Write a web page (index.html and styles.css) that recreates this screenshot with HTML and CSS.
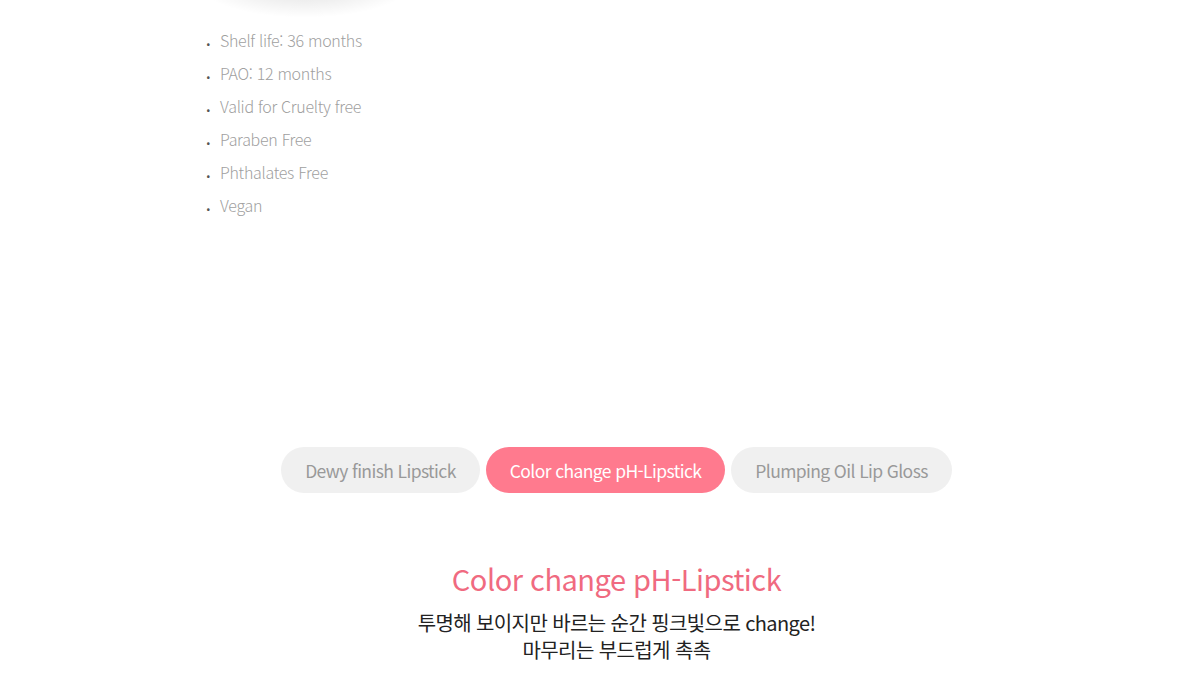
FILE: index.html
```html
<!DOCTYPE html>
<html lang="ko">
<head>
<meta charset="utf-8">
<link rel="stylesheet" href="styles.css">
</head>
<body>
<div class="page">
  <section class="spec">
    <div class="shadow"></div>
    <ul class="spec-list">
      <li>Shelf life: 36 months</li>
      <li>PAO: 12 months</li>
      <li>Valid for Cruelty free</li>
      <li>Paraben Free</li>
      <li>Phthalates Free</li>
      <li>Vegan</li>
    </ul>
  </section>
  <section class="products">
    <nav class="tabs">
      <span class="tab">Dewy finish Lipstick</span>
      <span class="tab active">Color change pH-Lipstick</span>
      <span class="tab">Plumping Oil Lip Gloss</span>
    </nav>
    <h2 class="title">Color change pH-Lipstick</h2>
    <p class="desc">투명해 보이지만 바르는 순간 핑크빛으로 change!<br>마무리는 부드럽게 촉촉</p>
  </section>
</div>
</body>
</html>
```

FILE: styles.css
```css
html, body {
  margin: 0;
  padding: 0;
  background: #fff;
}
body {
  font-family: "Noto Sans CJK KR", "Noto Sans", sans-serif;
  width: 1183px;
  height: 680px;
  overflow: hidden;
}
.page {
  display: flex;
  flex-direction: column;
}
.spec {
  padding-left: 206px;
  height: 447px;
  position: relative;
}
.shadow {
  position: absolute;
  left: 195px;
  top: -42px;
  width: 220px;
  height: 60px;
  background: radial-gradient(ellipse at 50% 40%, rgba(0,0,0,0.13) 0%, rgba(0,0,0,0.06) 40%, rgba(0,0,0,0) 70%);
}
.spec-list {
  list-style: none;
  margin: 0;
  padding: 28px 0 0 0;
}
.spec-list li {
  font-size: 16px;
  font-weight: 300;
  color: #a0a0a0;
  line-height: 33px;
  height: 33px;
  letter-spacing: -0.3px;
  display: flex;
  align-items: center;
  transform: translateY(-4px);
}
.spec-list li::before {
  content: ".";
  width: 14px;
  color: #555;
  font-weight: 700;
  font-size: 14px;
}
.products {
  padding-left: 50px;
  display: flex;
  flex-direction: column;
  align-items: center;
}
.tabs {
  display: flex;
  gap: 6px;
}
.tab {
  height: 46px;
  border-radius: 23px;
  background: #f0f0f0;
  color: #999;
  font-size: 17.5px;
  font-weight: 400;
  letter-spacing: -0.6px;
  padding: 0 24px;
  display: flex;
  align-items: center;
}
.tab.active {
  background: #ff7a8e;
  color: #fff;
}
.title {
  margin: 65px 0 0 0;
  font-size: 29px;
  font-weight: 400;
  color: #f06a80;
  line-height: 40px;
  letter-spacing: -0.5px;
}
.desc {
  margin: 11px 0 0 0;
  font-size: 20px;
  font-weight: 400;
  color: #222;
  line-height: 27px;
  text-align: center;
  letter-spacing: -0.6px;
}
```
